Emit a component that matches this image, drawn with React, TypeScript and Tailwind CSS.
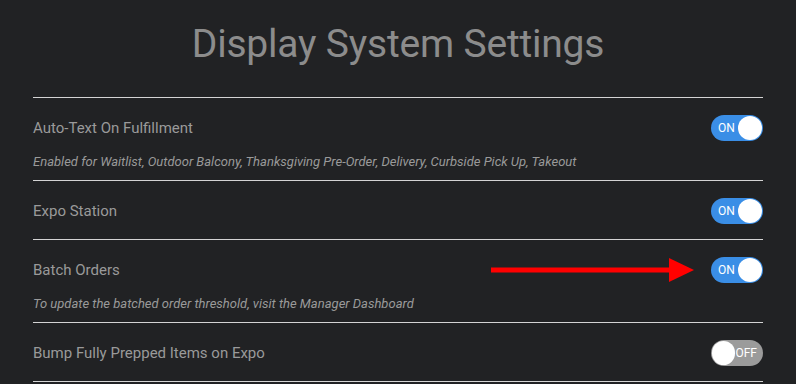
import React from "react";

const rows = [
  {
    label: "Auto-Text On Fulfillment",
    note: "Enabled for Waitlist, Outdoor Balcony, Thanksgiving Pre-Order, Delivery, Curbside Pick Up, Takeout",
    on: true,
  },
  { label: "Expo Station", on: true },
  {
    label: "Batch Orders",
    note: "To update the batched order threshold, visit the Manager Dashboard",
    on: true,
    arrow: true,
  },
  { label: "Bump Fully Prepped Items on Expo", on: false },
];

function Toggle({ on }: { on: boolean }) {
  return on ? (
    <div className="flex h-[26px] w-[52px] items-center justify-between rounded-full bg-[#3a8ee6] pl-[7px] pr-px">
      <span className="text-[12px] leading-none text-white">ON</span>
      <span className="h-[24px] w-[24px] rounded-full bg-white" />
    </div>
  ) : (
    <div className="flex h-[26px] w-[52px] items-center justify-between rounded-full bg-[#9b9b9b] pl-px pr-[6px]">
      <span className="h-[24px] w-[24px] rounded-full bg-white" />
      <span className="text-[12px] leading-none text-white">OFF</span>
    </div>
  );
}

function Arrow() {
  return (
    <svg className="absolute left-[-220px] top-[1px]" width="204" height="24" viewBox="0 0 204 24">
      <rect x="0" y="9.5" width="180" height="5" fill="#ff0000" />
      <polygon points="178,0 203,12 178,24" fill="#ff0000" />
    </svg>
  );
}

export default function App() {
  return (
    <div className="h-[384px] w-[796px] overflow-hidden bg-[#212224] px-[33px] font-['Roboto',sans-serif]">
      <h1 className="pt-[16px] pb-[25px] text-center text-[39px] font-normal leading-[56px] tracking-[-0.2px] text-[#8c8c8c]">
        Display System Settings
      </h1>
      <div className="border-t border-[#d4d4d4]">
        {rows.map((r) => (
          <div
            key={r.label}
            className={`border-b border-[#d4d4d4] pt-[17px] ${r.note ? "pb-[10px]" : "pb-[15px]"}`}
          >
            <div className="flex h-[26px] items-center justify-between">
              <span className="text-[15px] leading-none text-[#9a9a9a]">{r.label}</span>
              <div className="relative">
                {r.arrow && <Arrow />}
                <Toggle on={r.on} />
              </div>
            </div>
            {r.note && (
              <p className="mt-[13px] h-[16px] text-[13px] italic leading-[16px] text-[#9a9a9a]">
                {r.note}
              </p>
            )}
          </div>
        ))}
      </div>
    </div>
  );
}
